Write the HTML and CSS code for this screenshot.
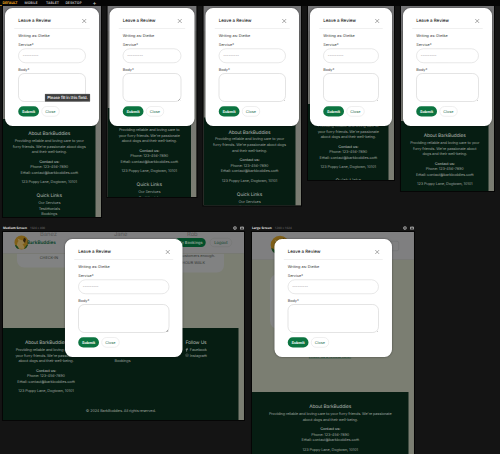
FILE: index.html
```
<!DOCTYPE html>
<html lang="en">
<head>
<meta charset="utf-8">
<title>Device preview</title>
<link rel="stylesheet" href="styles.css">
</head>
<body>
<div class="overview">
<nav class="tabs"><span class="tab active">DEFAULT</span><span class="tab mobile">MOBILE</span><span class="tab tablet">TABLET</span><span class="tab desktop">DESKTOP</span><span class="add">+</span></nav>
<main>
<div class="row phones" id="phones"></div>
<div class="row screens" id="screens"></div>
</main>
</div>
<script src="app.js"></script>
</body>
</html>
```
FILE: styles.css
```
* { box-sizing: border-box; }
html { overflow: hidden; background: #141414; }
body { margin: 0; width: 500px; height: 454px; overflow: hidden; background: #141414; }
/* Lay out at 4x and scale down so tiny text keeps its true proportions. */
.overview { zoom: 4; width: 500px; height: 454px; overflow: hidden; transform: scale(.25) rotate(.002deg); transform-origin: 0 0; text-rendering: geometricPrecision; font-family: Roboto, sans-serif; font-size: 4.7px; }
h2, h3, p { margin: 0; }
.tabs { display: flex; height: 6px; background: #050505; font: 700 3.4px/5px Inter, sans-serif; color: #aaa; text-align: center; }
.tab { width: 20px; }
.tab.active { color: #f0a51c; border-bottom: 1px solid #a87312; }
.tab.mobile { width: 22px; }
.tab.tablet { width: 21px; }
.tab.desktop { width: 21px; }
.add { width: 21px; font-size: 6px; font-weight: 400; color: #ccc; }
.row { display: flex; align-items: flex-start; }
.phones { height: 218px; padding-left: 3px; }
.screens { padding: 0 0 0 3px; gap: 8px; }
.device { position: relative; flex: none; outline: 1px solid #060606; background: #7b7d72; }
.p1 { width: 98px; height: 211px; margin-right: 6.5px; }
.p2 { width: 89px; height: 191px; margin-right: 7px; }
.p3 { width: 97.5px; height: 199.5px; margin-right: 7px; }
.p4 { width: 86px; height: 174px; margin-right: 7px; }
.p5 { width: 93px; height: 185px; }
.s6 { width: 241px; height: 188px; }
.s7 { width: 162px; height: 224px; }
.viewport { height: 100%; overflow: hidden; display: flex; flex-direction: column; background: linear-gradient(#707071 0, #7b7d72 100%); }
.s6 .viewport, .s7 .viewport { background: #7b7e72; }
.page { flex: none; overflow: hidden; }
.p1 .page { height: 113px; }
.p2 .page { height: 102px; }
.p3 .page { height: 111.5px; }
.p4 .page { height: 98px; }
.p5 .page { height: 115px; }
.s6 .page { height: 96px; }
.s7 .page { height: 160px; }
.phones .page { border-top: 25px solid #757577; }
.footer { flex: 1 0 auto; width: calc(100% - 5.5px); padding-top: 10px; background: #061d12; color: #9da29e; text-align: center; line-height: 5.65px; white-space: nowrap; font-family: Inter, sans-serif; font-size: 3.85px; letter-spacing: -.12px; }
.footer h3 { font-size: 4.8px; line-height: 8.8px; font-weight: 500; }
.footer p { margin-bottom: 3.7px; }
.footer p.address { margin-bottom: 6.4px; }
.footer b { font-weight: 600; }
.cols { display: grid; grid-template-columns: 86px 67px 80px; }
.copy { margin-top: 7.6px; }
.social { display: flex; justify-content: center; align-items: center; gap: 1px; }
.social svg { width: 3.6px; height: 4px; }
.header { display: flex; align-items: center; height: 21.5px; background: #7f7f80; border-bottom: .5px solid #72756c; color: #033e24; }
.s6 .header { padding-left: 11px; position: relative; overflow: hidden; }
.s7 .header { height: 28px; padding: 3px 15px 0 18px; justify-content: space-between; align-items: flex-start; }
.logo { width: 15px; height: 15px; flex: none; }
.s7 .logo { width: 20px; height: 20px; }
.brand { font: 600 4.7px/8px Inter, sans-serif; margin-left: -2px; }
.ghost { position: absolute; top: -1px; font: 5.8px/6px Inter, sans-serif; color: #555656; }
.g1 { left: 37px; } .g2 { left: 111px; } .g3 { left: 184px; }
.account { display: flex; margin-left: auto; padding-right: 12px; gap: 4px; font: 600 4px/9px Inter, sans-serif; }
.account span { padding: 0 3px; border-radius: 5px; }
.account .booking { background: #034f2a; color: #91a699; }
.account .logout { border: .5px solid #727573; font-weight: 400; line-height: 8px; padding: 0 4px; }
.menu { width: 10px; height: 10px; margin-top: 6px; border: .5px solid #6e7070; border-radius: 2px; }
.cards { display: flex; justify-content: space-between; padding: 0 20px 0 14px; }
.card { width: 64px; height: 14px; border-radius: 0 0 7px 7px; background: #818282; color: #303330; text-align: center; font: 3.8px/8px Inter, sans-serif; }
.card.walk { height: 19px; line-height: 12px; text-align: right; padding: 0 19px 0 0; }
.card.walk div { line-height: 4px; height: 3px; white-space: nowrap; margin-right: -10px; }
.panel { width: 120px; height: 55px; margin: 14px 0 0 18px; border-radius: 8px; background: #838484; }
.link { display: block; margin-top: 24.5px; padding-right: 6px; font: 3.8px/6px Inter, sans-serif; text-align: center; color: #044329; text-decoration: underline; }
.label { display: flex; height: 8px; align-items: center; font: 700 3.1px/8px "Open Sans", sans-serif; color: #e0e0e0; }
.label small { font-size: 3px; font-weight: 400; color: #777; margin-left: 3px; }
.label svg { width: 4px; height: 4px; margin-left: 3px; }
.label svg.first { margin-left: auto; }
.modal { position: absolute; top: 2px; left: 2px; right: 2px; height: 118px; padding: 0 13.2px; border-radius: 7.5px; background: #fff; box-shadow: 0 0 2px #0008; color: #333; font: 3.8px/6px Inter, sans-serif; white-space: nowrap; }
.s6 .modal { top: 7px; left: 62px; right: auto; width: 117.5px; }
.s7 .modal { top: 7px; left: 22.5px; right: auto; width: 117.5px; }
.top { display: flex; justify-content: space-between; align-items: center; height: 20.5px; margin: 0 -4px; padding: 6.2px 3px 0 4px; border-bottom: .5px solid #e2e2e2; }
.top h2 { font: 500 4.45px/6px Inter, sans-serif; color: #222; }
.top svg { width: 5px; height: 5px; }
.writer { padding-top: 3.7px; height: 12.7px; }
.label-text { line-height: 6px; height: 7.2px; }
.select { display: flex; align-items: center; height: 14.5px; border: .6px solid #d0d0d0; border-radius: 7.5px; padding-left: 4px; color: #666; }
.body-text { margin-top: 3.2px; padding-top: .7px; }
.area { height: 28.5px; border: .6px solid #c8c8c8; border-radius: 6px; position: relative; }
.area::after { content: ""; position: absolute; right: .5px; bottom: .5px; width: 2.5px; height: 2.5px; background: linear-gradient(135deg, transparent 50%, #aaa 50% 65%, transparent 65% 80%, #aaa 80%); }
.actions { display: flex; gap: 2.5px; margin-top: 4.5px; line-height: 10.2px; text-align: center; }
.submit { width: 20.7px; height: 10.2px; border-radius: 5.1px; background: #0c7440; color: #fff; font-weight: 700; }
.close { width: 18px; height: 10.2px; border: .5px solid #dedede; border-radius: 5.1px; line-height: 9.4px; color: #17694a; }
.tip { position: absolute; left: 42px; top: 88px; width: 45px; height: 7.5px; border: .5px solid #666; background: #3d3d3d; color: #fff; font: 500 4.15px/6.5px Inter, sans-serif; text-align: center; letter-spacing: -.1px; white-space: nowrap; }
```
FILE: app.js
```
const contact = `<p><b>Contact us:</b><br>Phone: 123-456-7890<br>Email: contact@barkbuddies.com</p><p class="address">123 Puppy Lane, Dogtown, 10101</p>`;
const wraps = {
  wide: "Providing reliable and loving care to your<br>furry friends. We're passionate about dogs<br>and their well-being.",
  mid: "Providing reliable and loving care to your<br>furry friends. We're passionate about<br>dogs and their well-being.",
  narrow: "Providing reliable and loving care to<br>your furry friends. We're passionate<br>about dogs and their well-being.",
  large: "Providing reliable and loving care to your furry friends. We're passionate<br>about dogs and their well-being."
};
const about = wrap => `<h3>About BarkBuddies</h3><p>${wraps[wrap]}</p>${contact}`;
const links = `<h3>Quick Links</h3>Our Services<br>Testimonials<br>Bookings`;
const modal = `<section class="modal">
  <div class="top"><h2>Leave a Review</h2><svg viewBox="0 0 10 10"><path d="M1 1l8 8M9 1L1 9" fill="none" stroke="#555"/></svg></div>
  <div class="writer">Writing as: Dietke</div>
  <div class="label-text">Service*</div><div class="select">---------</div>
  <div class="label-text body-text">Body*</div><div class="area"></div>
  <div class="actions"><span class="submit">Submit</span><span class="close">Close</span></div></section>`;
const logo = `<svg class="logo" viewBox="0 0 30 30"><circle cx="15" cy="15" r="14" fill="#806018"/><path d="M7 27Q4 17 9 12L7 7l7 3q7 0 8 6l-5 3q6 5 2 9z" fill="#917a48"/><path d="M20 5l4 3-2 8-4-4z" fill="#2f210d"/><path d="M2 20q5 0 8 8Q4 28 2 20m18 8l6-9 2 1q-2 6-8 8" fill="#174421"/></svg>`;
const gear = `<svg class="first" viewBox="0 0 10 10"><circle cx="5" cy="5" r="3.2" fill="none" stroke="#aaa" stroke-width="2.5"/></svg>`;
const camera = `<svg viewBox="0 0 10 10"><path d="M0 2h3l1-1h3l1 1h2v7H0z" fill="#999"/><circle cx="5" cy="5.5" r="2" fill="#222"/></svg>`;
const label = (name, size) => `<div class="label">${name}<small>${size}</small>${gear}${camera}</div>`;

document.getElementById("phones").innerHTML = ["wide", "narrow", "wide", "narrow", "mid"].map((wrap, i) =>
  `<article class="device p${i + 1}"><div class="viewport"><div class="page"></div><footer class="footer">${about(wrap)}${i < 4 ? links : ""}</footer></div>${modal}${i === 0 ? '<div class="tip">Please fill in this field.</div>' : ""}</article>`).join("");

document.getElementById("screens").innerHTML = `
<div>${label("Medium Screen", "1024 x 800")}<article class="device s6"><div class="viewport"><div class="page">
<header class="header"><span class="ghost g1">Banez</span><span class="ghost g2">Jane</span><span class="ghost g3">Rob</span>${logo}<span class="brand">BarkBuddies</span><div class="account"><span class="booking">My Bookings</span><span class="logout">Logout</span></div></header>
<div class="cards"><div class="card">CHECK-IN</div><div class="card walk"><div>customers enough.</div>HOUR WALK</div></div></div>
<footer class="footer"><div class="cols"><div>${about("narrow")}</div><div>${links}</div><div><h3>Follow Us</h3>
<div class="social"><svg viewBox="0 0 8 9"><path d="M6 1H5Q3 1 3 3v6M1 4h5" fill="none" stroke="#858a86" stroke-width="1.8"/></svg>Facebook</div>
<div class="social"><svg viewBox="0 0 9 9"><rect x="1" y="1" width="7" height="7" rx="2" fill="none" stroke="#858a86"/><circle cx="4.5" cy="4.5" r="1.5" fill="none" stroke="#858a86"/></svg>Instagram</div></div></div>
<div class="copy">© 2024 BarkBuddies. All rights reserved.</div></footer></div>${modal}</article></div>
<div>${label("Large Screen", "1280 x 1024")}<article class="device s7"><div class="viewport"><div class="page"><header class="header">${logo}<div class="menu"></div></header><div class="panel"></div><span class="link">Leave us a review here.</span></div>
<footer class="footer">${about("large")}</footer></div>${modal}</article></div>`;
```
